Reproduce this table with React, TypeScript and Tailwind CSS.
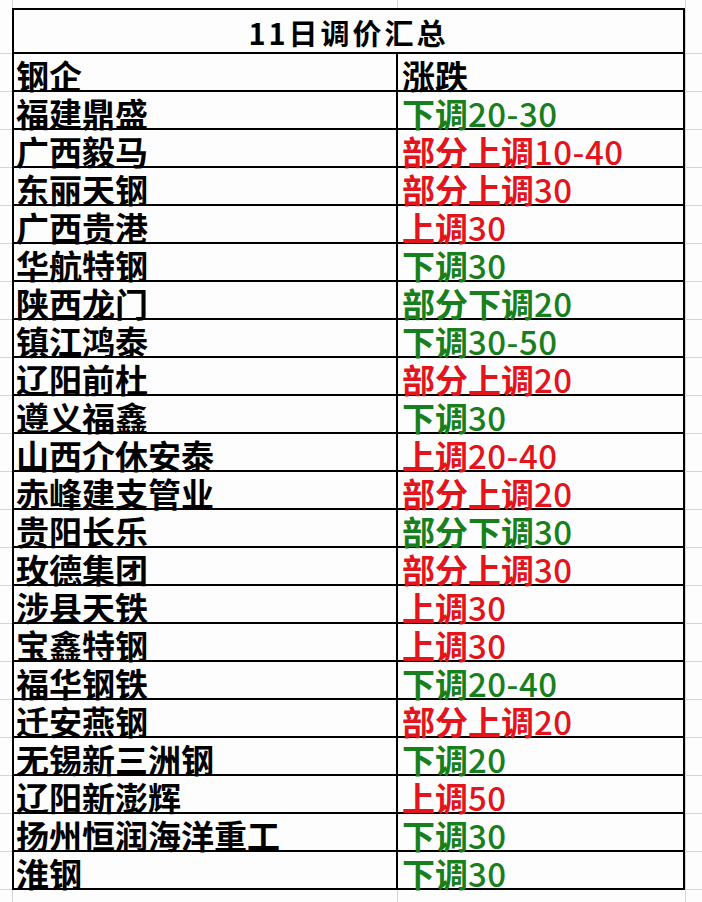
import React from "react";

type Row = { name: string; change: string; up: boolean };

const rows: Row[] = [
  { name: "福建鼎盛", change: "下调20-30", up: false },
  { name: "广西毅马", change: "部分上调10-40", up: true },
  { name: "东丽天钢", change: "部分上调30", up: true },
  { name: "广西贵港", change: "上调30", up: true },
  { name: "华航特钢", change: "下调30", up: false },
  { name: "陕西龙门", change: "部分下调20", up: false },
  { name: "镇江鸿泰", change: "下调30-50", up: false },
  { name: "辽阳前杜", change: "部分上调20", up: true },
  { name: "遵义福鑫", change: "下调30", up: false },
  { name: "山西介休安泰", change: "上调20-40", up: true },
  { name: "赤峰建支管业", change: "部分上调20", up: true },
  { name: "贵阳长乐", change: "部分下调30", up: false },
  { name: "玫德集团", change: "部分上调30", up: true },
  { name: "涉县天铁", change: "上调30", up: true },
  { name: "宝鑫特钢", change: "上调30", up: true },
  { name: "福华钢铁", change: "下调20-40", up: false },
  { name: "迁安燕钢", change: "部分上调20", up: true },
  { name: "无锡新三洲钢", change: "下调20", up: false },
  { name: "辽阳新澎辉", change: "上调50", up: true },
  { name: "扬州恒润海洋重工", change: "下调30", up: false },
  { name: "淮钢", change: "下调30", up: false },
];

function Change({ text }: { text: string }) {
  const m = text.match(/^([^0-9]*)([0-9].*)?$/);
  const head = m ? m[1] : text;
  const num = m && m[2] ? m[2] : "";
  return (
    <>
      {head}
      {num && <span className="font-medium tracking-[0.5px]">{num}</span>}
    </>
  );
}

function StripRow({ h }: { h: string }) {
  return (
    <div className={`flex ${h}`}>
      <div className="w-[12px]" />
      <div className="w-[385px] border-l border-[#d6d6d6]" />
      <div className="w-[288px] border-l border-[#d6d6d6]" />
      <div className="flex-1 border-l border-[#d6d6d6]" />
    </div>
  );
}

function DataRow({ left, right, color }: { left: string; right: string; color: string }) {
  return (
    <div className="flex h-[38px]">
      <div className="w-[12px] border-b border-[#d6d6d6]" />
      <div className="flex w-[673px] border-x-2 border-b-2 border-black">
        <div className="flex w-[384px] items-end border-r-2 border-black pl-[2px]">
          <span className="block whitespace-nowrap leading-[30px] text-black">{left}</span>
        </div>
        <div className="flex flex-1 items-end pl-[4px]">
          <span className={`block whitespace-nowrap leading-[30px] ${color}`}>
            <Change text={right} />
          </span>
        </div>
      </div>
      <div className="flex-1 border-b border-l border-[#d6d6d6]" />
    </div>
  );
}

export default function App() {
  return (
    <div className="h-[902px] w-[702px] overflow-hidden bg-[#fdfdfe] font-['Noto_Sans_CJK_SC','Noto_Sans_CJK_JP',sans-serif] text-[33px] font-bold">
      <StripRow h="h-[8px]" />
      <div className="flex h-[46px]">
        <div className="w-[12px] border-b border-[#d6d6d6]" />
        <div className="flex w-[673px] items-center justify-center border-2 border-black pt-[1px]">
          <span className="text-[29px] leading-[34px] tracking-[3px] text-black">11日调价汇总</span>
        </div>
        <div className="flex-1 border-b border-l border-[#d6d6d6]" />
      </div>
      <DataRow left="钢企" right="涨跌" color="text-black" />
      {rows.map((r) => (
        <DataRow
          key={r.name}
          left={r.name}
          right={r.change}
          color={r.up ? "text-[#e3141c]" : "text-[#17801c]"}
        />
      ))}
      <StripRow h="h-[14px]" />
    </div>
  );
}
